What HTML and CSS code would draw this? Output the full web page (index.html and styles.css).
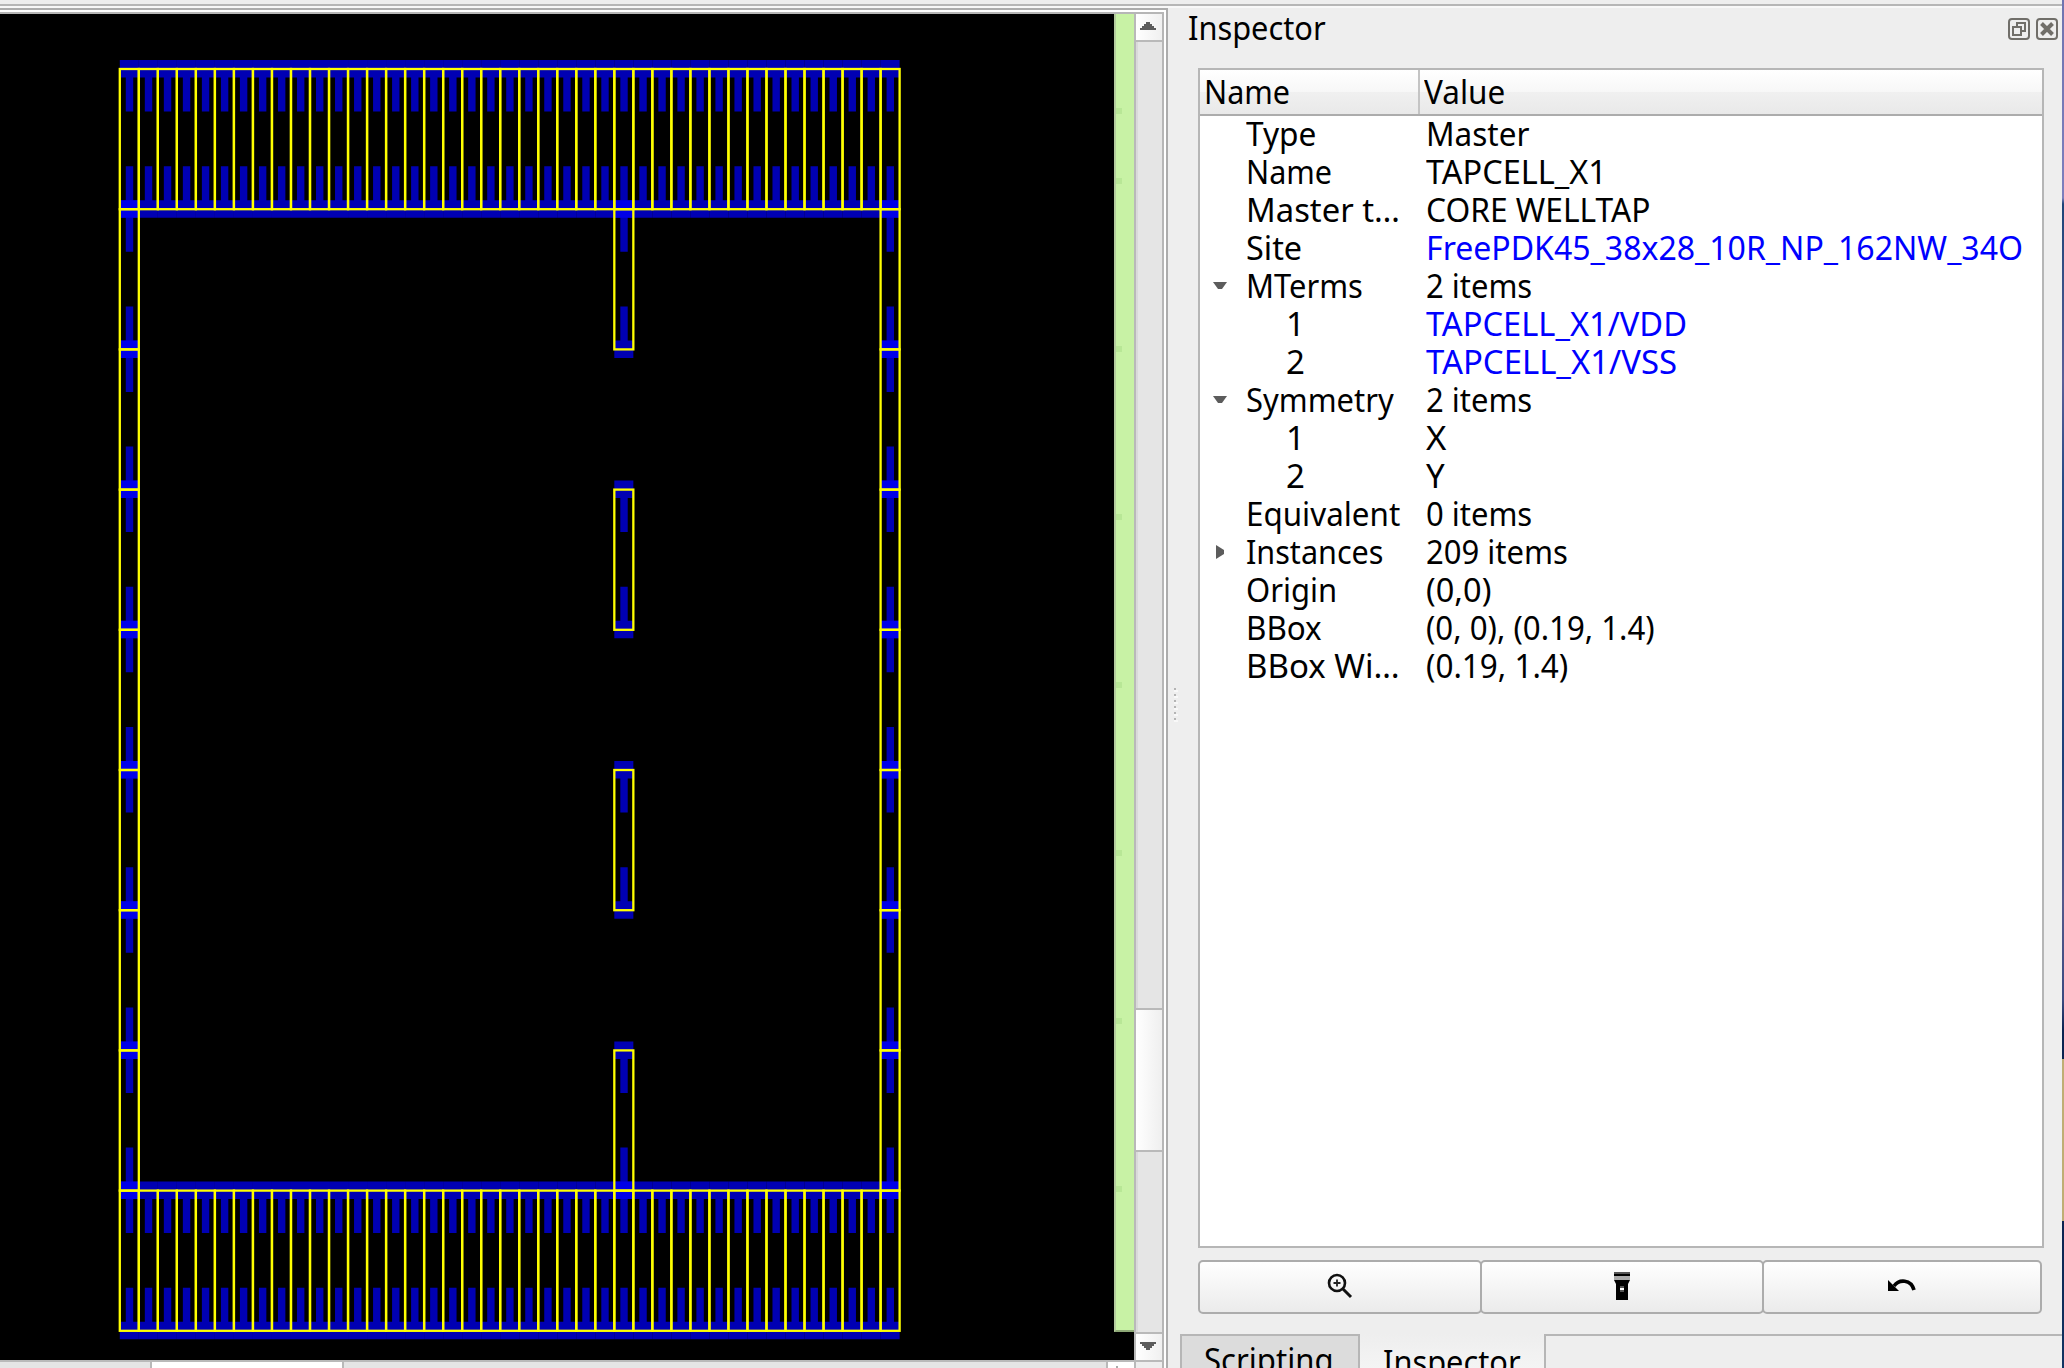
FILE: index.html
```html
<!DOCTYPE html>
<html lang="en">
<head>
<meta charset="utf-8">
<title>Inspector</title>
<link rel="stylesheet" href="styles.css">
</head>
<body>
<div class="app">
  <main class="viewer">
    <div class="view-row">
      <div class="canvas">
        <svg id="layout" width="1114" height="1346" viewBox="0 14 1114 1346"></svg>
      </div>
      <div class="strip"><i class="first"></i><i></i><i></i><i></i><i></i><i></i><i></i><i></i></div>
      <div class="vbar">
        <div class="btn"><svg width="16" height="8"><path d="M0 8V6H2V4H4V2H6V0H10V2H12V4H14V6H16V8Z"/></svg></div>
        <div class="track"><div class="thumb"></div></div>
        <div class="btn down"><svg width="16" height="8"><path d="M0 0V2H2V4H4V6H6V8H10V6H12V4H14V2H16V0Z"/></svg></div>
      </div>
    </div>
    <div class="hbar"><div class="hthumb"></div><div class="hbtn"></div><div class="corner"></div></div>
  </main>
  <div class="splitter"><svg width="6" height="34"><path d="M4 2V34" stroke="#f8f8f8" stroke-width="4" stroke-dasharray="2 4"/><path d="M3 0V34" stroke="#b4b4b4" stroke-width="2" stroke-dasharray="2 4"/></svg></div>
  <aside class="dock">
    <header class="dock-title">
      <span class="t" data-w="138">Inspector</span>
      <div class="dock-icons">
        <svg width="22" height="22" viewBox="0 0 22 22"><rect x="1" y="1" width="20" height="20" rx="3"/><path d="M9 8V5H17V13H14M5 9H13V17H5Z"/></svg>
        <svg width="22" height="22" viewBox="0 0 22 22"><rect x="1" y="1" width="20" height="20" rx="3"/><path d="M5.500 5.500L16.500 16.500M16.500 5.500L5.500 16.500" stroke-width="4"/></svg>
      </div>
    </header>
    <section class="tree">
      <div class="head"><div class="c1"><span class="t" data-w="86">Name</span></div><div class="c2"><span class="t" data-w="81">Value</span></div></div>
      <div class="rows">
        <div class="row"><b></b><span class="n"><span class="t" data-w="70">Type</span></span><span class="t" data-w="103">Master</span></div>
        <div class="row"><b></b><span class="n"><span class="t" data-w="86">Name</span></span><span class="t" data-w="181">TAPCELL_X1</span></div>
        <div class="row"><b></b><span class="n"><span class="t" data-w="154">Master t…</span></span><span class="t" data-w="224">CORE WELLTAP</span></div>
        <div class="row"><b></b><span class="n"><span class="t" data-w="56">Site</span></span><span class="t link" data-w="597">FreePDK45_38x28_10R_NP_162NW_34O</span></div>
        <div class="row"><b><svg width="14" height="8"><path d="M0 0H14L9 7H5Z"/></svg></b><span class="n"><span class="t" data-w="117">MTerms</span></span><span class="t" data-w="106">2 items</span></div>
        <div class="row"><b></b><span class="n sub"><span class="t" data-w="19">1</span></span><span class="t link" data-w="261">TAPCELL_X1/VDD</span></div>
        <div class="row"><b></b><span class="n sub"><span class="t" data-w="19">2</span></span><span class="t link" data-w="251">TAPCELL_X1/VSS</span></div>
        <div class="row"><b><svg width="14" height="8"><path d="M0 0H14L9 7H5Z"/></svg></b><span class="n"><span class="t" data-w="148">Symmetry</span></span><span class="t" data-w="106">2 items</span></div>
        <div class="row"><b></b><span class="n sub"><span class="t" data-w="19">1</span></span><span class="t" data-w="20">X</span></div>
        <div class="row"><b></b><span class="n sub"><span class="t" data-w="19">2</span></span><span class="t" data-w="19">Y</span></div>
        <div class="row"><b></b><span class="n"><span class="t" data-w="154">Equivalent</span></span><span class="t" data-w="106">0 items</span></div>
        <div class="row"><b class="closed"><svg width="8" height="14"><path d="M0 0V14L8 9V5Z"/></svg></b><span class="n"><span class="t" data-w="137">Instances</span></span><span class="t" data-w="142">209 items</span></div>
        <div class="row"><b></b><span class="n"><span class="t" data-w="91">Origin</span></span><span class="t" data-w="65">(0,0)</span></div>
        <div class="row"><b></b><span class="n"><span class="t" data-w="76">BBox</span></span><span class="t" data-w="229">(0, 0), (0.19, 1.4)</span></div>
        <div class="row"><b></b><span class="n"><span class="t" data-w="154">BBox Wi…</span></span><span class="t" data-w="142">(0.19, 1.4)</span></div>
      </div>
    </section>
    <div class="actions">
      <button class="a1"><svg width="26" height="26" viewBox="0 0 26 26"><circle cx="10" cy="10" r="8" fill="none" stroke="#111" stroke-width="2.6"/><path d="M10 6.500V13.500M6.500 10H13.500" stroke="#222" stroke-width="1.800"/><path d="M16 16L24 24" stroke="#111" stroke-width="3"/></svg></button>
      <button class="a2"><svg width="16" height="28" viewBox="0 0 16 28"><path d="M0 0H16V8H0Z" fill="#000"/><path d="M0 4H16V8H0Z" fill="#aaa"/><path d="M0 0H16V2H0Z" fill="#555"/><path d="M0 8H16L14 12V28H2V12Z" fill="#000"/><path d="M6 14H10V20H6Z" fill="#555"/><path d="M6 16H10V18H6Z" fill="#fff"/></svg></button>
      <button class="a3"><svg width="28" height="14" viewBox="0 0 28 14"><path d="M0 1L11 12H0Z" fill="#000"/><path d="M6 7C11 0 23 0 26 11" fill="none" stroke="#000" stroke-width="3.600"/></svg></button>
    </div>
    <nav class="tabs">
      <div class="tab"><span class="t" data-w="130">Scripting</span></div>
      <div class="tab on"><span class="t" data-w="138">Inspector</span></div>
      <div class="rest"></div>
    </nav>
  </aside>
  <div class="desktop"></div>
</div>
<script src="app.js"></script>
</body>
</html>
```
FILE: styles.css
```css
* { box-sizing: border-box; }
body { margin: 0; background: #eee; font: 33px/38px "Noto Sans", sans-serif; color: #000; overflow: hidden; }
.app { width: 2064px; height: 1368px; display: flex; background: linear-gradient(#eee 4px, #b6b6b6 4px, #b6b6b6 6px, #f8f8f8 6px, #f8f8f8 8px, #eee 8px); }
svg { display: block; }
.t { display: inline-block; white-space: nowrap; transform-origin: 0 50%; }

.viewer { margin-top: 8px; width: 1168px; height: 1360px; border-top: 2px solid #acacac; border-right: 2px solid #acacac; background: #fff; padding: 2px 2px 0 0; display: flex; flex-direction: column; }
.view-row { height: 1348px; border-top: 2px solid #b6b6b6; border-right: 2px solid #b6b6b6; display: flex; background: #000; }
.canvas { width: 1114px; height: 1346px; background: #000; }
.strip { width: 20px; height: 1318px; background: #c8f2a5; border-left: 2px solid #b4cc9e; border-bottom: 2px solid #8da876; padding-top: 94px; display: flex; flex-direction: column; gap: 162px; }
.strip i { width: 6px; height: 6px; background: #b8e796; flex: none; }
.strip .first { margin-bottom: -98px; }
.vbar { width: 28px; border-left: 2px solid #b9b9b9; display: flex; flex-direction: column; background: #e5e5e5; }
.btn { height: 28px; padding-left: 4px; display: flex; align-items: center; border-bottom: 2px solid #b9b9b9; background: linear-gradient(90deg, #fff, #f0f0f0); fill: #5c5c5c; padding-bottom: 2px; }
.btn.down { border-bottom: 0; border-top: 2px solid #b9b9b9; }
.track { flex: 1; padding-top: 966px; border-left: 2px solid #dadada; }
.thumb { height: 144px; margin-left: -2px; border: solid #b9b9b9; border-width: 2px 0; background: linear-gradient(90deg, #fff, #efefef); }
.hbar { height: 8px; border-top: 2px solid #b9b9b9; border-right: 2px solid #b6b6b6; background: #e5e5e5; display: flex; padding-left: 150px; }
.hthumb { width: 194px; background: #fff; border: solid #b9b9b9; border-width: 0 2px; }
.hbtn { margin-left: 762px; width: 30px; background: linear-gradient(#aaa, #aaa) 8px 4px / 2px 2px no-repeat #fff; border: solid #b9b9b9; border-width: 0 2px; }
.corner { flex: 1; background: #eee; }

.splitter { width: 12px; padding: 688px 0 0 4px; }
.dock { width: 882px; display: flex; flex-direction: column; }
.dock-title { height: 68px; display: flex; justify-content: space-between; padding: 9px 4px 0 8px; }
.dock-icons { display: flex; gap: 6px; padding-top: 9px; fill: none; stroke: #706e69; stroke-width: 2; }
.tree { margin-left: 18px; width: 846px; height: 1180px; border: 2px solid #b6b6b6; background: #fff; }
.head { height: 46px; display: flex; border-bottom: 2px solid #acacac; background: linear-gradient(#fff, #f7f7f7 50%, #f0f0f0 50%, #e9e9e9); }
.c1 { width: 220px; border-right: 2px solid #c4c4c4; padding: 3px 0 0 4px; }
.c2 { padding: 3px 0 0 4px; }
.rows { margin-top: -1px; }
.row { height: 38px; display: flex; }
.row b { width: 46px; padding-left: 13px; display: flex; align-items: center; fill: #5c5c5c; }
.row .closed { padding-left: 16px; }
.n { width: 180px; }
.n.sub { padding-left: 40px; }
.link { color: #00f; }
.actions { margin: 12px 0 0 18px; height: 54px; display: flex; }
.actions button { padding: 0 0 2px; border: 2px solid #acacac; border-radius: 5px; background: linear-gradient(#fff, #ebebeb); display: flex; align-items: center; justify-content: center; }
.a1, .a2 { width: 284px; margin-right: -2px; }
.a3 { width: 280px; }
.tabs { margin-top: 20px; height: 34px; display: flex; overflow: hidden; }
.tab { width: 180px; border: 2px solid #b6b6b6; border-bottom: 0; background: #dcdcdc; padding: 5px 0 0 22px; }
.tab.on { width: 184px; background: linear-gradient(#eee, #f4f4f4); border: 0; padding: 9px 0 0 23px; }
.rest { flex: 1; border-top: 2px solid #b6b6b6; border-left: 2px solid #b6b6b6; }
.desktop { width: 2px; background: linear-gradient(#6f74b0 0, #7d7fbd 198px, #1d4478 204px, #5a5f98 380px, #274a85 480px, #1d3f78 760px, #54598c 900px, #3a4a80 1000px, #0a2350 1030px, #0a2350 1059px, #bfae74 1059px, #bfae74 1221px, #0a2350 1221px, #123463); }
```
FILE: app.js
```js
// Placement of the tap cells: full first and last rows, edge columns, and a centre column.
const X0 = 119.8, Y0 = 69, W = 19.02, H = 140.2, COLS = 41, ROWS = 9, MID = 26;
const cells = [];
for (let r = 0; r < ROWS; r++) {
  for (let c = 0; c < COLS; c++) {
    if (r === 0 || r === ROWS - 1 || c === 0 || c === COLS - 1 || (c === MID && r % 2 === 1)) {
      cells.push([X0 + c * W, Y0 + r * H]);
    }
  }
}
const metal = cells.map(([x, y]) =>
  `<path d="M${x} ${y - 9}h${W}v17.500h-5.620v34h-7.400v-34h-6zM${x} ${y + H - 9}h6v-34h7.400v34h5.620v17.500h-${W}z"/>`).join('');
const outlines = cells.map(([x, y]) =>
  `<rect x="${x}" y="${y}" width="${W}" height="${H}"/>`).join('');
document.getElementById('layout').innerHTML =
  `<g fill="#00f" fill-opacity=".7">${metal}</g><g fill="none" stroke="#ff0" stroke-width="2.300">${outlines}</g>`;

document.querySelectorAll('.t').forEach(el => {
  el.style.transform = `scaleX(${el.dataset.w / el.offsetWidth})`;
});
```
